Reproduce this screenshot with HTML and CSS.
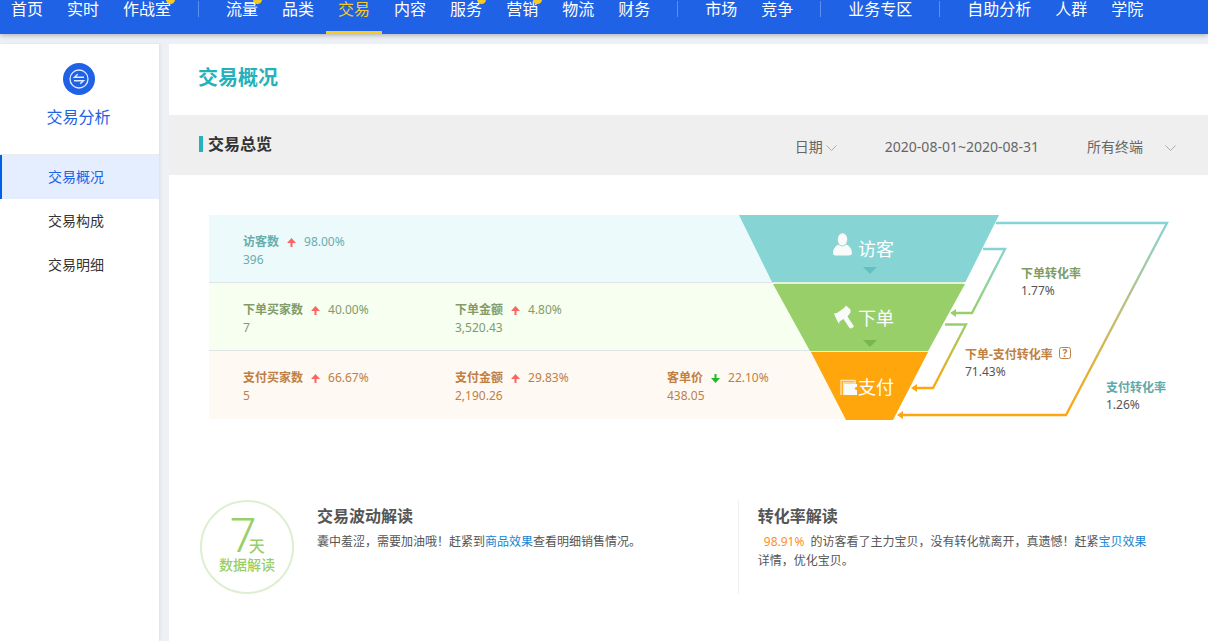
FILE: index.html
```html
<!DOCTYPE html>
<html lang="zh-CN">
<head>
<meta charset="utf-8">
<meta name="viewport" content="width=device-width, initial-scale=1">
<title>交易概况</title>
<link rel="stylesheet" href="styles.css">
</head>
<body>
<header class="topbar">
  <nav class="topnav" aria-label="主导航">
    <a class="topnav-link" href="#">首页</a>
    <a class="topnav-link" href="#">实时</a>
    <a class="topnav-link has-dot" href="#">作战室</a>
    <span class="topnav-sep"></span>
    <a class="topnav-link has-dot" href="#">流量</a>
    <a class="topnav-link" href="#">品类</a>
    <a class="topnav-link is-active" href="#">交易</a>
    <a class="topnav-link" href="#">内容</a>
    <a class="topnav-link has-dot" href="#">服务</a>
    <a class="topnav-link has-dot" href="#">营销</a>
    <a class="topnav-link" href="#">物流</a>
    <a class="topnav-link" href="#">财务</a>
    <span class="topnav-sep"></span>
    <a class="topnav-link" href="#">市场</a>
    <a class="topnav-link" href="#">竞争</a>
    <span class="topnav-sep"></span>
    <a class="topnav-link" href="#">业务专区</a>
    <span class="topnav-sep"></span>
    <a class="topnav-link" href="#">自助分析</a>
    <a class="topnav-link" href="#">人群</a>
    <a class="topnav-link" href="#">学院</a>
  </nav>
</header>

<div class="layout">
  <aside class="sidebar">
    <div class="sidebar-head">
      <svg class="sidebar-icon" viewBox="0 0 32 32" aria-hidden="true">
        <circle cx="16" cy="16" r="16" fill="#2062e6"/>
        <circle cx="16" cy="16" r="9" fill="none" stroke="#e3ecfd" stroke-width="1.3"/>
        <path d="M21 14.300H11.500L14.800 11.300M11 17.800H20.500L17.200 20.800" fill="none" stroke="#e3ecfd" stroke-width="1.400"/>
      </svg>
      <span class="sidebar-title">交易分析</span>
    </div>
    <nav class="sidenav" aria-label="交易分析">
      <a class="sidenav-link is-active" href="#">交易概况</a>
      <a class="sidenav-link" href="#">交易构成</a>
      <a class="sidenav-link" href="#">交易明细</a>
    </nav>
  </aside>

  <main class="main">
    <h1 class="page-title">交易概况</h1>
    <section>
      <div class="section-bar">
        <h2 class="section-title">交易总览</h2>
        <div class="filters">
          <div class="picker picker-date">
            <select class="picker-select" aria-label="日期"><option>日期</option></select>
            <svg class="picker-arrow" viewBox="0 0 11 6" aria-hidden="true"><polyline points="0.5,0.5 5.5,5.5 10.5,0.5"/></svg>
          </div>
          <button class="date-range" type="button">2020-08-01~2020-08-31</button>
          <div class="picker picker-terminal">
            <select class="picker-select" aria-label="终端"><option>所有终端</option></select>
            <svg class="picker-arrow" viewBox="0 0 11 6" aria-hidden="true"><polyline points="0.5,0.5 5.5,5.5 10.5,0.5"/></svg>
          </div>
        </div>
      </div>

      <div class="overview">
        <div class="metrics">
          <div class="metric-row row-visit">
            <div class="metric">
              <div class="metric-top"><strong>访客数</strong><svg class="trend up" viewBox="0 0 9 9" aria-label="上升"><path d="M4.500 0 9 5H5.500V9H3.500V5H0Z"/></svg><span>98.00%</span></div>
              <div>396</div>
            </div>
          </div>
          <div class="metric-row row-order">
            <div class="metric">
              <div class="metric-top"><strong>下单买家数</strong><svg class="trend up" viewBox="0 0 9 9" aria-label="上升"><path d="M4.500 0 9 5H5.500V9H3.500V5H0Z"/></svg><span>40.00%</span></div>
              <div>7</div>
            </div>
            <div class="metric">
              <div class="metric-top"><strong>下单金额</strong><svg class="trend up" viewBox="0 0 9 9" aria-label="上升"><path d="M4.500 0 9 5H5.500V9H3.500V5H0Z"/></svg><span>4.80%</span></div>
              <div>3,520.43</div>
            </div>
          </div>
          <div class="metric-row row-pay">
            <div class="metric">
              <div class="metric-top"><strong>支付买家数</strong><svg class="trend up" viewBox="0 0 9 9" aria-label="上升"><path d="M4.500 0 9 5H5.500V9H3.500V5H0Z"/></svg><span>66.67%</span></div>
              <div>5</div>
            </div>
            <div class="metric">
              <div class="metric-top"><strong>支付金额</strong><svg class="trend up" viewBox="0 0 9 9" aria-label="上升"><path d="M4.500 0 9 5H5.500V9H3.500V5H0Z"/></svg><span>29.83%</span></div>
              <div>2,190.26</div>
            </div>
            <div class="metric">
              <div class="metric-top"><strong>客单价</strong><svg class="trend down" viewBox="0 0 9 9" aria-label="下降"><path d="M4.500 9 9 4H5.500V0H3.500V4H0Z"/></svg><span>22.10%</span></div>
              <div>438.05</div>
            </div>
          </div>
        </div>

        <svg class="funnel" viewBox="0 0 430 206" role="img" aria-label="转化漏斗">
          <defs>
            <linearGradient id="g-visit-order" gradientUnits="userSpaceOnUse" x1="0" y1="34" x2="0" y2="98"><stop offset="0" stop-color="#86d4d3"/><stop offset="1" stop-color="#98cf69"/></linearGradient>
            <linearGradient id="g-order-pay" gradientUnits="userSpaceOnUse" x1="0" y1="109" x2="0" y2="173"><stop offset="0" stop-color="#98cf69"/><stop offset="1" stop-color="#ffa60d"/></linearGradient>
            <linearGradient id="g-visit-pay" gradientUnits="userSpaceOnUse" x1="0" y1="8" x2="0" y2="200"><stop offset="0" stop-color="#86d4d3"/><stop offset="1" stop-color="#ffa60d"/></linearGradient>
          </defs>
          <path d="M0 0H260L154 205H107Z" fill="#e4f3df"/>
          <path d="M0 0H260L226.500 67H33Z" fill="#86d4d3"/>
          <path d="M34 69H226L189 136H71Z" fill="#98cf69"/>
          <path d="M72 137H189L154 205H107Z" fill="#ffa60d"/>
          <path d="M124 52H138L131 59Z" fill="#66bfbf"/>
          <path d="M124 125H138L131 132Z" fill="#76b84c"/>

          <g fill="none" stroke-width="2.300">
            <path d="M257 8H428L327 200H163" stroke="url(#g-visit-pay)"/>
            <path d="M244 34H266L233 98H217" stroke="url(#g-visit-order)"/>
            <path d="M206 109.500H227L194 173H177" stroke="url(#g-order-pay)"/>
          </g>
          <path d="M211 98 217 94V102Z" fill="#98cf69"/>
          <path d="M172 173 178 169V177ZM158 200 164 196V204Z" fill="#ffa60d"/>

          <g fill="#f8fbfa">
            <ellipse cx="103.500" cy="24.500" rx="4.700" ry="6.200"/>
            <path d="M99.500 29.500Q103.500 33.500 107.500 29.500C111 31 113 34 113 38.500Q112.500 40.500 109 40.500H97Q94 40.500 94 38C94.200 33.500 96.500 31 99.500 29.500Z"/>
            <path d="M95 98.500 98 98 105 93 107 90.500 111.500 94.500V97.500L108.500 101.500 115 111.500 112.500 113.500 110.500 113 104.500 104 100.500 106.500 100 109 97.500 104.500Z"/>
            <path d="M104.500 169H118V172H117L115.500 173.500 117 175H118V180H104.500Z"/>
          </g>
          <path d="M102 180V165.500H116V167.500M104.500 180V168H117" fill="none" stroke="#fde6bd" stroke-width="1.300"/>

          <g class="funnel-name">
            <text x="119" y="41">访客</text>
            <text x="119" y="110">下单</text>
            <text x="119" y="179">支付</text>
          </g>
          <g class="funnel-label">
            <text x="282" y="63" fill="#7c9c64">下单转化率</text>
            <text x="226" y="144" fill="#c08043">下单-支付转化率</text>
            <text x="367" y="177" fill="#5fa9aa">支付转化率</text>
          </g>
          <g class="funnel-rate">
            <text x="282" y="80">1.77%</text>
            <text x="226" y="161">71.43%</text>
            <text x="367" y="194">1.26%</text>
          </g>
          <rect x="320.500" y="132.500" width="11" height="11" rx="2" fill="none" stroke="#c08043"/>
          <text class="funnel-help" x="326" y="142">?</text>
        </svg>
      </div>
    </section>

    <section class="insights">
      <div class="insight insight-wave">
        <div class="badge">
          <div class="badge-days"><span class="badge-num">7</span><span class="badge-unit">天</span></div>
          <div class="badge-name">数据解读</div>
        </div>
        <div>
          <h3 class="insight-title">交易波动解读</h3>
          <p class="insight-text">囊中羞涩，需要加油哦！赶紧到<a href="#">商品效果</a>查看明细销售情况。</p>
        </div>
      </div>
      <div class="insight insight-rate">
        <div>
          <h3 class="insight-title">转化率解读</h3>
          <p class="insight-text"><em class="insight-value">98.91%</em>的访客看了主力宝贝，没有转化就离开，真遗憾！赶紧<a href="#">宝贝效果</a>详情，优化宝贝。</p>
        </div>
      </div>
    </section>
  </main>
</div>
</body>
</html>
```
FILE: styles.css
```css
* {
  box-sizing: border-box;
}

body {
  margin: 0;
  min-height: 100vh;
  display: flex;
  flex-direction: column;
  background: #edf1f6;
  color: #555;
  font-family: "Noto Sans", "Noto Sans CJK SC", sans-serif;
  font-size: 12px;
  line-height: 18px;
}

h1, h2, h3, p {
  margin: 0;
}

a {
  color: #1684cf;
  text-decoration: none;
}

/* Top navigation */
.topbar {
  background: #2062e6;
  box-shadow: 0 1px 5px rgba(0, 0, 0, 0.3);
}

.topnav {
  display: flex;
  white-space: nowrap;
}

.topnav-link {
  position: relative;
  padding: 0 12px 13px;
  border-bottom: 3px solid transparent;
  color: #fff;
  font-size: 16px;
  line-height: 18px;
}

.topnav-link:first-child {
  padding-left: 11px;
}

.topnav-link.is-active {
  border-color: #f5cb22;
  color: #f5cb22;
}

.has-dot::after {
  content: "";
  position: absolute;
  top: -5px;
  right: 8px;
  width: 9px;
  height: 9px;
  border-radius: 50%;
  background: #f5cb22;
}

.topnav-sep {
  width: 1px;
  height: 16px;
  margin: 1px 15px 0;
  background: #5e8fee;
}

/* Page frame */
.layout {
  flex: 1;
  display: flex;
  gap: 10px;
  padding-top: 10px;
}

.sidebar {
  flex: none;
  width: 159px;
  background: #fff;
  box-shadow: 1px 0 3px rgba(0, 0, 0, 0.08);
}

.sidebar-head {
  display: flex;
  flex-direction: column;
  align-items: center;
  gap: 10px;
  padding: 19px 2px 25px 0;
}

.sidebar-icon {
  width: 32px;
  height: 32px;
}

.sidebar-title {
  color: #2062e6;
  font-size: 16px;
  line-height: 24px;
}

.sidenav {
  display: flex;
  flex-direction: column;
  border-top: 1px solid #e8ecf1;
}

.sidenav-link {
  padding-left: 46px;
  border-left: 2px solid transparent;
  color: #333;
  font-size: 14px;
  line-height: 44px;
}

.sidenav-link.is-active {
  border-color: #0060e6;
  background: #e5eefe;
  color: #2062e6;
}

.main {
  flex: 1;
  min-width: 0;
  background: #fff;
}

.page-title {
  padding: 19px 29px 22px;
  color: #24b1bb;
  font-size: 20px;
  line-height: 30px;
}

.section-bar {
  display: flex;
  justify-content: space-between;
  height: 60px;
  padding: 20px 32px 16px 30px;
  background: #efefef;
}

.section-title {
  align-self: flex-start;
  padding-left: 5px;
  border-left: 4px solid #24b1bb;
  margin-top: 1px;
  color: #333;
  font-size: 16px;
  line-height: 16px;
}

.filters {
  display: flex;
  align-items: center;
  gap: 48px;
}

.picker {
  position: relative;
  flex: none;
}

.picker-date {
  width: 42px;
}

.picker-terminal {
  width: 89px;
}

.picker-select,
.date-range {
  display: block;
  padding: 0;
  border: 0;
  appearance: none;
  background: none;
  color: #666;
  font: 14px/20px "Noto Sans", "Noto Sans CJK SC", sans-serif;
}

.picker-select {
  width: 100%;
}

.picker-arrow {
  position: absolute;
  top: 8px;
  right: 0;
  width: 11px;
  height: 6px;
  fill: none;
  stroke: #aaa;
  pointer-events: none;
}

/* Overview rows and funnel */
.overview {
  display: grid;
  grid-template-columns: minmax(530px, 1fr) 430px;
  padding: 40px 39px 0 40px;
}

.metrics {
  margin-right: -110px;
}

.metric-row {
  display: grid;
  grid-template-columns: repeat(3, 212px);
  height: 68px;
  padding: 18px 0 0 34px;
  border-bottom: 1px solid #dfe5e6;
}

.row-visit {
  background: #edfafb;
  color: #68aeae;
}

.row-order {
  background: #f6fff0;
  color: #839b69;
}

.row-pay {
  border-color: transparent;
  background: #fff9f3;
  color: #c08043;
}

.metric-top {
  display: flex;
  align-items: center;
  gap: 8px;
}

.trend {
  width: 9px;
  height: 9px;
}

.trend.up {
  fill: #ff6464;
}

.trend.down {
  fill: #1dbc2a;
}

.funnel {
  position: relative;
  width: 430px;
  height: 206px;
}

.funnel-name {
  fill: #fff;
  font-size: 18px;
}

.funnel-label {
  font-size: 12px;
  font-weight: 700;
}

.funnel-rate {
  fill: #555;
}

.funnel-help {
  fill: #c08043;
  font-size: 10px;
  font-weight: 700;
  text-anchor: middle;
}

/* Insights */
.insights {
  display: grid;
  grid-template-columns: 5fr 4fr;
  padding: 79px 40px 40px 31px;
}

.insight {
  display: flex;
  gap: 23px;
}

.insight-rate {
  padding: 0 19px;
  border-left: 1px solid #f0f0f0;
}

.badge {
  flex: none;
  width: 94px;
  height: 94px;
  border: 2px solid #dcefd0;
  border-radius: 50%;
  color: #98cf69;
  text-align: center;
}

.badge-days {
  height: 54px;
  line-height: 64px;
}

.badge-num {
  margin-right: -8px;
  font-size: 48px;
  font-weight: 300;
}

.badge-unit {
  font-size: 16px;
  font-weight: 500;
}

.badge-name {
  font-size: 14px;
  font-weight: 500;
  line-height: 18px;
}

.insight-title {
  padding: 4px 0;
  font-size: 16px;
  line-height: 24px;
}

.insight-text {
  line-height: 19px;
}

.insight-value {
  margin: 0 6px;
  color: #ff8f1f;
  font-style: normal;
}
```
